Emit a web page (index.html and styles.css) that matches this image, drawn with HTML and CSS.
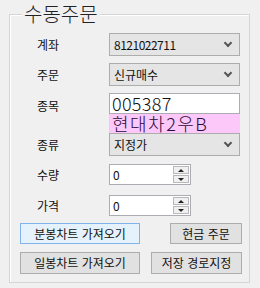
FILE: index.html
```html
<!DOCTYPE html>
<html lang="ko">
<head>
<meta charset="utf-8">
<link rel="stylesheet" href="styles.css">
</head>
<body>
<div class="group">
  <div class="title">수동주문</div>
  <div class="row r-acct">
    <span class="label">계좌</span>
    <div class="combo"><span class="digits">8121022711</span><span class="arrow"></span></div>
  </div>
  <div class="row r-order">
    <span class="label">주문</span>
    <div class="combo"><span>신규매수</span><span class="arrow"></span></div>
  </div>
  <div class="row r-stock">
    <span class="label">종목</span>
    <div class="stack">
      <div class="codebox">005387</div>
      <div class="namebox">현대차2우B</div>
    </div>
  </div>
  <div class="row r-kind">
    <span class="label">종류</span>
    <div class="combo"><span>지정가</span><span class="arrow"></span></div>
  </div>
  <div class="row r-qty">
    <span class="label">수량</span>
    <div class="spin"><span class="val">0</span><span class="btns"><span class="up"></span><span class="dn"></span></span></div>
  </div>
  <div class="row r-price">
    <span class="label">가격</span>
    <div class="spin"><span class="val">0</span><span class="btns"><span class="up"></span><span class="dn"></span></span></div>
  </div>
  <div class="brow b1">
    <button class="btn focus w120">분봉차트 가져오기</button>
    <button class="btn w72">현금 주문</button>
  </div>
  <div class="brow b2">
    <button class="btn w120">일봉차트 가져오기</button>
    <button class="btn w91">저장 경로지정</button>
  </div>
</div>
</body>
</html>
```
FILE: styles.css
```css
html, body {
  margin: 0;
  padding: 0;
  background: #f0f0f0;
  width: 260px;
  height: 288px;
  overflow: hidden;
  font-family: "Noto Sans CJK KR", "Noto Sans", sans-serif;
  color: #111;
}
.group {
  margin: 14px 10px 0 9px;
  height: 269px;
  border: 1px solid #d5d5d5;
  box-shadow: inset 1px 1px 0 #fff;
  box-sizing: border-box;
  padding: 0 8px 0 27px;
}
.title {
  display: inline-block;
  margin: -14px 0 0 -15px;
  padding: 0 2px;
  background: #f0f0f0;
  font-size: 20px;
  line-height: 26px;
  font-weight: 300;
  color: #222;
  height: 24px;
  vertical-align: top;
}
.row {
  display: flex;
  align-items: center;
}
.label {
  width: 72px;
  font-size: 12px;
  line-height: 14px;
}
.r-acct { margin-top: -6px; }
.r-order { margin-top: 7px; }
.r-stock { margin-top: 7px; align-items: flex-start; }
.r-stock .label { margin-top: 6px; }
.r-kind { margin-top: 0; }
.r-qty { margin-top: 8px; }
.r-price { margin-top: 10px; }
.combo {
  width: 131px;
  height: 23px;
  box-sizing: border-box;
  border: 1px solid #adadad;
  background: #e5e5e5;
  display: flex;
  align-items: center;
  justify-content: space-between;
  padding: 0 8px 0 4px;
  font-size: 12px;
}
.digits { letter-spacing: -0.5px; }
.arrow {
  width: 4px;
  height: 4px;
  border-right: 2px solid #555;
  border-bottom: 2px solid #555;
  transform: rotate(45deg);
  margin-top: -3px;
}
.stack { display: flex; flex-direction: column; }
.codebox {
  width: 131px;
  height: 21px;
  box-sizing: border-box;
  border: 1px solid #abadb3;
  background: #fff;
  font-size: 18px;
  font-weight: 300;
  line-height: 19px;
  padding-left: 2px;
  letter-spacing: 0.3px;
  overflow: hidden;
}
.namebox {
  width: 131px;
  height: 19px;
  box-sizing: border-box;
  background: #fcc8fa;
  border-left: 1px solid #d9d9d9;
  font-size: 18px;
  font-weight: 300;
  line-height: 19px;
  padding-left: 2px;
  letter-spacing: 1.5px;
  color: #2a0a3a;
  overflow: hidden;
}
.spin {
  width: 82px;
  height: 21px;
  box-sizing: border-box;
  border: 1px solid #abadb3;
  background: #fff;
  display: flex;
  justify-content: space-between;
  align-items: stretch;
}
.val { font-size: 12px; line-height: 19px; padding-left: 3px; }
.btns {
  width: 16px;
  display: flex;
  flex-direction: column;
  padding: 1px;
  gap: 1px;
}
.btns span {
  flex: 1;
  border: 1px solid #b8b8b8;
  background: #f0f0f0;
  position: relative;
}
.btns span::after {
  content: "";
  position: absolute;
  left: 4px;
  width: 0;
  height: 0;
  border-left: 3px solid transparent;
  border-right: 3px solid transparent;
}
.btns .up::after { top: 2px; border-bottom: 3px solid #222; }
.btns .dn::after { top: 2px; border-top: 3px solid #222; }
.brow {
  display: flex;
  justify-content: space-between;
  padding-left: 10px;
  margin-right: -1px;
  margin-left: -27px;
}
.b1 { margin-top: 7px; }
.b2 { margin-top: 8px; }
.btn {
  height: 21px;
  box-sizing: border-box;
  border: 1px solid #adadad;
  background: #e1e1e1;
  font-family: "Noto Sans CJK KR", sans-serif;
  font-size: 12px;
  line-height: 18px;
  padding: 0;
  color: #111;
}
.btn.focus {
  border-color: #7eb4ea;
  background: #e5f1fb;
}
.w120 { width: 120px; }
.w72 { width: 72px; }
.w91 { width: 91px; }
.b2 .btn { height: 22px; }
```
